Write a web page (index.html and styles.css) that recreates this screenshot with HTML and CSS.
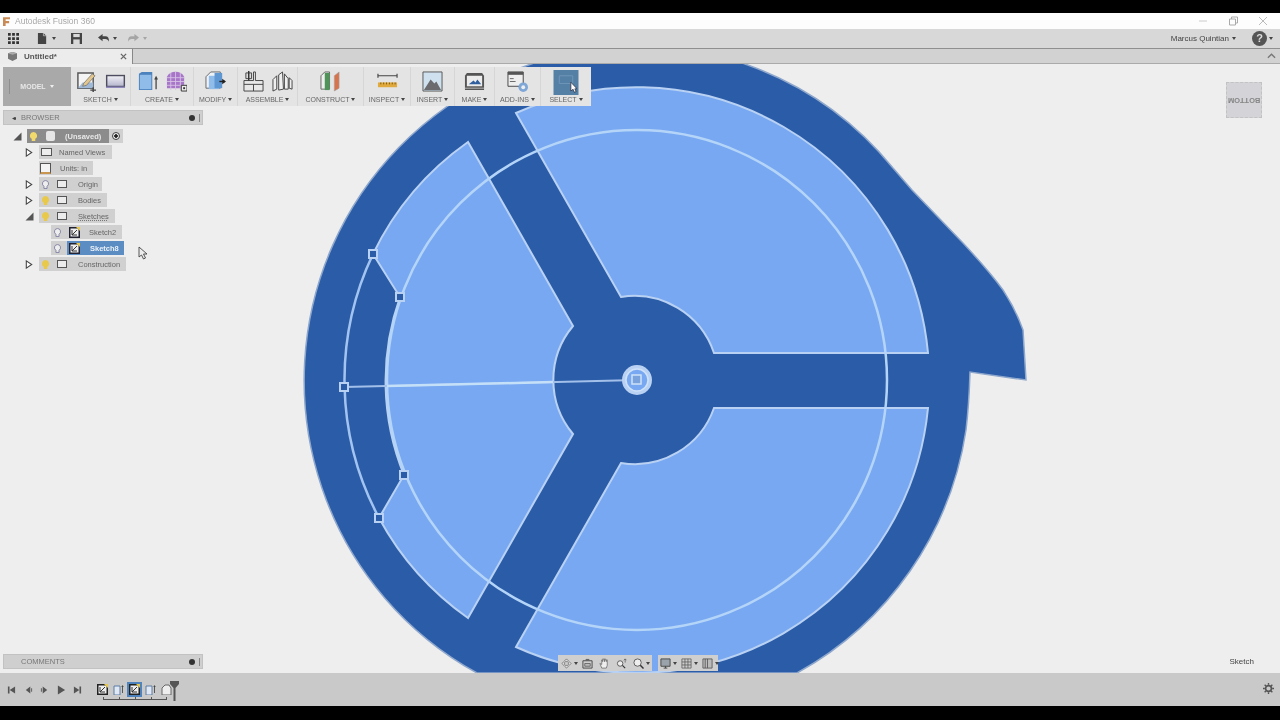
FILE: index.html
```html
<!DOCTYPE html>
<html lang="en">
<head>
<meta charset="utf-8">
<title>Autodesk Fusion 360</title>
<link rel="stylesheet" href="styles.css">
</head>
<body>
<div class="letterbox-top"></div>
<header class="titlebar">
  <div class="title-left">
    <svg class="f-logo" viewBox="0 0 8 10"><path d="M0 0h8v2.500H3v2h4v2.400H3V10H0z" fill="#c98a55"/></svg>
    <span>Autodesk Fusion 360</span>
  </div>
  <div class="win-controls">
    <svg viewBox="0 0 10 10"><path d="M1 5h8" stroke="#ccc"/></svg>
    <svg viewBox="0 0 10 10"><path d="M1.500 3h6v6h-6zM3.500 3V1h6v6H7.500" fill="none" stroke="#aaa"/></svg>
    <svg viewBox="0 0 10 10"><path d="M1 1l8 8M9 1l-8 8" stroke="#bbb"/></svg>
  </div>
</header>
<div class="appbar">
  <div class="app-left">
    <svg class="i12" viewBox="0 0 12 12"><path d="M0 0h3v3H0zM4.500 0h3v3h-3zM9 0h3v3H9zM0 4.500h3v3H0zM4.500 4.500h3v3h-3zM9 4.500h3v3H9zM0 9h3v3H0zM4.500 9h3v3h-3zM9 9h3v3H9z" fill="#333"/></svg>
    <span class="file-btn">
      <svg class="i12" viewBox="0 0 12 12"><path d="M1 0h6l3 3v9H1z" fill="#444"/><path d="M7 0v3h3" fill="none" stroke="#ddd" stroke-width=".7"/></svg><i class="caret"></i>
    </span>
    <svg class="i12 save" viewBox="0 0 12 12"><path d="M0 0h12v12H0z" fill="#444"/><path d="M2.500 1h7v3.500h-7z" fill="#d9d9d9"/><path d="M2.500 7h7v5h-7z" fill="#d9d9d9"/></svg>
    <span class="undo-btn">
      <svg class="i12" viewBox="0 0 12 12"><path d="M0 5l5-4v2.500h3c3 0 4 2 4 6-1-2-2-3-4-3H5V9z" fill="#444"/></svg><i class="caret"></i>
    </span>
    <span class="redo-btn">
      <svg class="i12" viewBox="0 0 12 12"><path d="M12 5L7 1v2.500H4c-3 0-4 2-4 6 1-2 2-3 4-3h3V9z" fill="#a5a5a5"/></svg><i class="caret light"></i>
    </span>
  </div>
  <div class="app-right">
    <span class="user">Marcus Quintian</span><i class="caret user-caret"></i>
    <span class="help">?</span><i class="caret"></i>
  </div>
</div>
<div class="tabbar">
  <div class="tab">
    <svg class="tab-icon" viewBox="0 0 12 10"><path d="M1 1.500L6 0l5 1.500v6L6 10 1 7.500z" fill="#777"/><path d="M1 1.500L6 3l5-1.500L6 0z" fill="#aaa"/></svg>
    <span class="tab-name">Untitled*</span>
    <svg class="tab-close" viewBox="0 0 8 8"><path d="M1 1l6 6M7 1L1 7" stroke="#666" stroke-width="1.500"/></svg>
  </div>
  <svg class="tab-chevron" viewBox="0 0 10 6"><path d="M1 5l4-4 4 4" fill="none" stroke="#777" stroke-width="1.500"/></svg>
</div>

<main class="viewport">
  <svg class="model" viewBox="0 64 1280 609" width="1280" height="609">
    <path class="body" d="M745 64 A334 334 0 0 1 893 168 L912 190 L963 243 Q990 272 1003 290 Q1016 310 1023 330 L1026 380 L970 372 Q969 405 966 430 A334 334 0 0 1 797 673 L477 673 A334 334 0 0 1 745 64 Z"/>
    <path class="sector" d="M516 113 L621 297 A84 84 0 0 1 714 353 L928 353 A293 293 0 0 0 516 113 Z"/>
    <path class="sector" d="M516 647 L621 463 A84 84 0 0 0 714 408 L928 408 A293 293 0 0 1 516 647 Z"/>
    <path class="sector" d="M573 326 L468 142 A293 293 0 0 0 373 254 L400 297 A250 250 0 0 0 404 475 L379 518 A293 293 0 0 0 468 618 L573 434 A84 84 0 0 1 573 326 Z"/>
    <circle class="ring" cx="637" cy="380" r="250"/>
    <path class="arc" d="M373 254 A293 293 0 0 0 379 518"/>
    <path class="axis" d="M344 387 L637 380"/>
    <path class="axis-bright" d="M387 386 L553 382"/>
    <g class="node">
      <rect x="369" y="250" width="8" height="8"/>
      <rect x="396" y="293" width="8" height="8"/>
      <rect x="340" y="383" width="8" height="8"/>
      <rect x="400" y="471" width="8" height="8"/>
      <rect x="375" y="514" width="8" height="8"/>
    </g>
    <circle class="hub-o" cx="637" cy="380" r="15"/>
    <circle class="hub-i" cx="637" cy="380" r="11"/>
    <rect class="hub-s" x="632" y="375" width="9" height="9"/>
  </svg>

  <nav class="ribbon">
    <div class="model-btn"><span>MODEL</span><i class="caret white"></i></div>
    <div class="rgroup g-sketch">
      <div class="ricons">
        <svg class="r22" viewBox="0 0 22 22"><path d="M2 2h16v16H2z" fill="#f4f4f4" stroke="#555" stroke-width="1.500"/><path d="M2 18l5-6h11v6z" fill="#9fb9d6"/><path d="M8 13l9-10 3 2-9 10-4 1z" fill="#e3c78c" stroke="#666" stroke-width=".7"/><path d="M15 20h6M18 17v6" stroke="#444" stroke-width="1.500"/></svg>
        <svg class="r22" viewBox="0 0 22 22"><defs><linearGradient id="plane" x1="0" y1="0" x2="0" y2="1"><stop offset="0" stop-color="#eeeef4"/><stop offset="1" stop-color="#b8b8d0"/></linearGradient></defs><path d="M1 4h20v13H1z" fill="#4d4d60"/><path d="M2.500 5.500h17v10h-17z" fill="url(#plane)"/><path d="M1 17h20" stroke="#8e86bc" stroke-width="1.500"/></svg>
      </div>
      <div class="rlabel">SKETCH<i class="caret"></i></div>
    </div>
    <div class="rgroup g-create">
      <div class="ricons">
        <svg class="r22" viewBox="0 0 22 22"><path d="M2 3l3-2h11v19H2z" fill="#4d83bd"/><path d="M3 4h12v15H3z" fill="#8fbce8"/><path d="M20 8v11" stroke="#555" stroke-width="1.500"/><path d="M18 9l2-4 2 4z" fill="#444"/></svg>
        <svg class="r22" viewBox="0 0 22 22"><path d="M1 6c3-7 15-7 18 0v12H1z" fill="#a776c8"/><path d="M1 7h18M1 11h18M1 15h18M5 2v18M10 1v19M15 2v18" stroke="#d8c4e6" stroke-width=".9"/><path d="M16 15h6v6h-6z" fill="#eee" stroke="#333"/><path d="M18 17h2v2h-2z" fill="#333"/></svg>
      </div>
      <div class="rlabel">CREATE<i class="caret"></i></div>
    </div>
    <div class="rgroup g-modify">
      <div class="ricons">
        <svg class="r22" viewBox="0 0 22 22"><path d="M1 6l5-5h10v17H1z" fill="#eef2f7" stroke="#666"/><path d="M4 5h11v14H4z" fill="#8fbce8"/><path d="M10 2h8v16h-8z" fill="#5e97d1"/><path d="M15 11h6" stroke="#222" stroke-width="1.500"/><path d="M18 8l4 3-4 3z" fill="#222"/></svg>
      </div>
      <div class="rlabel">MODIFY<i class="caret"></i></div>
    </div>
    <div class="rgroup g-assemble">
      <div class="ricons">
        <svg class="r22" viewBox="0 0 22 22"><path d="M1 10h10V1h2v9h8v11H1z" fill="#e8e8e8" stroke="#444"/><path d="M1 14h20M11 14v7" stroke="#444"/><path d="M3 2h6v6H3z" fill="#ddd" stroke="#444"/><path d="M6 0v10" stroke="#333" stroke-width="1.500"/></svg>
        <svg class="r22" viewBox="0 0 22 22"><path d="M1 9l4-4v14l-4 2zM7 4l4-3 1 18-5 1zM13 3l4 5v11h-4zM18 7l3 3v9l-3-1z" fill="#efefef" stroke="#444"/></svg>
      </div>
      <div class="rlabel">ASSEMBLE<i class="caret"></i></div>
    </div>
    <div class="rgroup g-construct">
      <div class="ricons">
        <svg class="r22" viewBox="0 0 22 22"><path d="M1 5l4-4h5v18H1z" fill="#eee" stroke="#666"/><path d="M5 2h5v18H5z" fill="#4e9458"/><path d="M15 5l5-4v17l-5 3z" fill="#d9734a" stroke="#a0a0a0" stroke-width=".6"/></svg>
      </div>
      <div class="rlabel">CONSTRUCT<i class="caret"></i></div>
    </div>
    <div class="rgroup g-inspect">
      <div class="ricons">
        <svg class="r22" viewBox="0 0 22 22"><path d="M1 5h20M1 3v4M21 3v4" stroke="#444" stroke-width="1.200"/><path d="M1 12h20v5H1z" fill="#e0aa3e"/><path d="M4 12v2M7 12v2M10 12v2M13 12v2M16 12v2M19 12v2" stroke="#7d5a12"/></svg>
      </div>
      <div class="rlabel">INSPECT<i class="caret"></i></div>
    </div>
    <div class="rgroup g-insert">
      <div class="ricons">
        <svg class="r22" viewBox="0 0 22 22"><path d="M1 1h20v20H1z" fill="#cfe0ee" stroke="#555"/><path d="M2 20l7-11 4 4 2-2 5 9z" fill="#6b6b6f"/></svg>
      </div>
      <div class="rlabel">INSERT<i class="caret"></i></div>
    </div>
    <div class="rgroup g-make">
      <div class="ricons">
        <svg class="r22" viewBox="0 0 22 22"><path d="M3 2h16l2 3v15H1V5z" fill="#555"/><path d="M3 5h16v11H3z" fill="#ececec"/><path d="M5 14l5-4 2 2 2-3 4 5z" fill="#2f5f9e"/><path d="M1 18h20" stroke="#bbb"/></svg>
      </div>
      <div class="rlabel">MAKE<i class="caret"></i></div>
    </div>
    <div class="rgroup g-addins">
      <div class="ricons">
        <svg class="r22" viewBox="0 0 22 22"><path d="M1 1h16v15H1z" fill="#eee" stroke="#444"/><path d="M1 1h16v3H1z" fill="#555"/><path d="M3 8h4M3 11h6" stroke="#666"/><circle cx="17" cy="17" r="5" fill="#7ea6d6"/><circle cx="17" cy="17" r="2" fill="#eee"/></svg>
      </div>
      <div class="rlabel">ADD-INS<i class="caret"></i></div>
    </div>
    <div class="rgroup g-select">
      <div class="select-icon">
        <svg class="sel-rect" viewBox="0 0 26 26"><path d="M0 0h26v26H0z" fill="#5580a6"/><path d="M6 6h14v8H6z" fill="none" stroke="#6e96b8"/></svg>
        <svg class="sel-cursor" viewBox="0 0 8 12"><path d="M1 0v10l2.500-2L5 11.500 7 10.500 5.500 7.500H8z" fill="#fff" stroke="#223" stroke-width=".8"/></svg>
      </div>
      <div class="rlabel">SELECT<i class="caret"></i></div>
    </div>
  </nav>

  <aside class="browser">
    <div class="panel-head">
      <span class="collapse">◂◂</span><span class="panel-title">BROWSER</span>
      <span class="pin"></span><span class="sep"></span>
    </div>
    <ul class="tree">
      <li class="row root">
        <svg class="exp open" viewBox="0 0 9 9"><path d="M8.500.5v8H.5z" fill="#555"/></svg>
        <span class="chip c-root">
          <svg class="bulb" viewBox="0 0 8 10"><path d="M4 0a4 4 0 0 1 2 7.500V10H2V7.500A4 4 0 0 1 4 0z" fill="#f2d96b"/></svg>
          <span class="doc"></span><b>(Unsaved)</b>
        </span>
        <span class="radio"><i></i></span>
      </li>
      <li class="row">
        <svg class="exp" viewBox="0 0 8 10"><path d="M1 1l6 4-6 4z" fill="#fff" stroke="#444" stroke-width="1.200"/></svg>
        <span class="chip c-views"><span class="folder"></span><span class="label">Named Views</span></span>
      </li>
      <li class="row">
        <span class="exp-gap"></span>
        <span class="chip c-units"><span class="sheet"></span><span class="label">Units: in</span></span>
      </li>
      <li class="row">
        <svg class="exp" viewBox="0 0 8 10"><path d="M1 1l6 4-6 4z" fill="#fff" stroke="#444" stroke-width="1.200"/></svg>
        <span class="chip c-origin">
          <svg class="bulb" viewBox="0 0 8 10"><path d="M4 .5a3.500 3.500 0 0 1 1.800 6.500v2.500H2.200V7A3.500 3.500 0 0 1 4 .5z" fill="#eee" stroke="#7a7aa0"/></svg>
          <span class="folder"></span><span class="label">Origin</span>
        </span>
      </li>
      <li class="row">
        <svg class="exp" viewBox="0 0 8 10"><path d="M1 1l6 4-6 4z" fill="#fff" stroke="#444" stroke-width="1.200"/></svg>
        <span class="chip c-bodies">
          <svg class="bulb" viewBox="0 0 8 10"><path d="M4 0a4 4 0 0 1 2 7.500V10H2V7.500A4 4 0 0 1 4 0z" fill="#e9c94a"/></svg>
          <span class="folder"></span><span class="label">Bodies</span>
        </span>
      </li>
      <li class="row">
        <svg class="exp open" viewBox="0 0 9 9"><path d="M8.500.5v8H.5z" fill="#555"/></svg>
        <span class="chip c-sketches">
          <svg class="bulb" viewBox="0 0 8 10"><path d="M4 0a4 4 0 0 1 2 7.500V10H2V7.500A4 4 0 0 1 4 0z" fill="#e9c94a"/></svg>
          <span class="folder"></span><span class="label dotted">Sketches</span>
        </span>
      </li>
      <li class="row child">
        <span class="chip c-sk2">
          <svg class="bulb" viewBox="0 0 8 10"><path d="M4 .5a3.500 3.500 0 0 1 1.800 6.500v2.500H2.200V7A3.500 3.500 0 0 1 4 .5z" fill="#eee" stroke="#7a7aa0"/></svg>
          <svg class="sk-icon" viewBox="0 0 11 11"><path d="M0 0h11v11H0z" fill="#223"/><path d="M1.500 1.500h8v8h-8z" fill="#eee"/><path d="M3 8l5-5M3 3v5h5" fill="none" stroke="#333"/><path d="M7 0h4v4z" fill="#e6c84f"/></svg>
          <span class="label">Sketch2</span>
        </span>
      </li>
      <li class="row child">
        <span class="chip c-sk8">
          <svg class="bulb" viewBox="0 0 8 10"><path d="M4 .5a3.500 3.500 0 0 1 1.800 6.500v2.500H2.200V7A3.500 3.500 0 0 1 4 .5z" fill="#eee" stroke="#7a7aa0"/></svg>
          <span class="active">
            <svg class="sk-icon" viewBox="0 0 11 11"><path d="M0 0h11v11H0z" fill="#223"/><path d="M1.500 1.500h8v8h-8z" fill="#eee"/><path d="M3 8l5-5M3 3v5h5" fill="none" stroke="#333"/><path d="M7 0h4v4z" fill="#e6c84f"/></svg>
            <b>Sketch8</b>
          </span>
        </span>
      </li>
      <li class="row">
        <svg class="exp" viewBox="0 0 8 10"><path d="M1 1l6 4-6 4z" fill="#fff" stroke="#444" stroke-width="1.200"/></svg>
        <span class="chip c-constr">
          <svg class="bulb" viewBox="0 0 8 10"><path d="M4 0a4 4 0 0 1 2 7.500V10H2V7.500A4 4 0 0 1 4 0z" fill="#e9c94a"/></svg>
          <span class="folder"></span><span class="label">Construction</span>
        </span>
      </li>
    </ul>
  </aside>

  <svg class="mouse" viewBox="0 0 10 14"><path d="M1 1v10l2.500-2L5.500 13l2-1-2-4H9z" fill="#eee" stroke="#444" stroke-width=".9"/></svg>

  <div class="viewcube"><span>BOTTOM</span></div>

  <div class="comments">
    <span class="panel-title">COMMENTS</span><span class="pin"></span><span class="sep"></span>
  </div>

  <div class="navbar">
    <div class="nav-seg seg-a">
      <svg class="n12" viewBox="0 0 12 12"><path d="M6 1l2 2-1 1h-2L4 3zM1 6l2-2 1 1v2L3 8zM11 6L9 4 8 5v2l1 1zM6 11L4 9l1-1h2l1 1z" fill="#ddd" stroke="#666" stroke-width=".8"/></svg><i class="caret"></i>
      <svg class="n12" viewBox="0 0 12 12"><path d="M1 3h10v8H1z" fill="none" stroke="#444"/><path d="M3 6h6v3H3z" fill="#bbb" stroke="#444" stroke-width=".7"/><path d="M4 1h4v2H4z" fill="#666"/></svg>
      <svg class="n12" viewBox="0 0 12 12"><path d="M3 11L1 6l2 1V2l1 2V1h1l1 3V1h1l1 3V2h1v6l-1 3z" fill="#eee" stroke="#666" stroke-width=".8"/></svg>
      <svg class="n12" viewBox="0 0 12 12"><circle cx="4.500" cy="6" r="3" fill="#eee" stroke="#555"/><path d="M7 8l3 3" stroke="#333" stroke-width="1.300"/><path d="M10 1v4M8.500 2.500L10 1l1.500 1.500" fill="none" stroke="#555" stroke-width=".8"/></svg>
      <svg class="n12" viewBox="0 0 12 12"><circle cx="5" cy="5" r="4" fill="#eee" stroke="#555"/><path d="M8 8l3.500 3.500" stroke="#333" stroke-width="1.600"/></svg><i class="caret"></i>
    </div>
    <div class="nav-seg seg-b">
      <svg class="n12" viewBox="0 0 12 12"><path d="M1 1h10v8H1z" fill="#9aa3ab" stroke="#444"/><path d="M4 11h4M6 9v2" stroke="#444"/></svg><i class="caret"></i>
      <svg class="n12" viewBox="0 0 12 12"><path d="M1 1h10v10H1zM4.300 1v10M7.600 1v10M1 4.300h10M1 7.600h10" fill="#ccc" stroke="#555" stroke-width=".8"/></svg><i class="caret"></i>
      <svg class="n12" viewBox="0 0 12 12"><path d="M1 1h10v10H1zM6 1v10M3.500 1v10" fill="#bbb" stroke="#555" stroke-width=".9"/></svg><i class="caret"></i>
    </div>
  </div>

  <div class="mode-label">Sketch</div>
</main>

<footer class="timeline">
  <div class="controls">
    <svg class="tc" viewBox="0 0 10 10"><path d="M1 1h1.800v8H1zM9 1v8L3 5z" fill="#555"/></svg>
    <svg class="tc" viewBox="0 0 10 10"><path d="M7 1v8L2 5zM8 3h1v4H8z" fill="#555"/></svg>
    <svg class="tc" viewBox="0 0 10 10"><path d="M3 1v8l5-4zM1 3h1v4H1z" fill="#555"/></svg>
    <svg class="tc" viewBox="0 0 10 10"><path d="M1 0v10l8-5z" fill="#555"/></svg>
    <svg class="tc" viewBox="0 0 10 10"><path d="M1 1v8l6-4zM7.200 1H9v8H7.200z" fill="#555"/></svg>
  </div>
  <div class="features">
    <svg class="tf" viewBox="0 0 11 11"><path d="M0 0h11v11H0z" fill="#222"/><path d="M1.500 1.500h8v8h-8z" fill="#eee"/><path d="M3 8l5-5M3 3v5h5" fill="none" stroke="#333"/><path d="M7 0h4v4z" fill="#e6c84f"/></svg>
    <svg class="tf" viewBox="0 0 11 11"><path d="M1 2h6v9H1z" fill="#dfe8f3" stroke="#5c7da5"/><path d="M9.500 9V2" stroke="#555"/><path d="M8.300 3l1.200-2 1.200 2z" fill="#444"/></svg>
    <span class="tf-active"><svg class="tf" viewBox="0 0 11 11"><path d="M0 0h11v11H0z" fill="#222"/><path d="M1.500 1.500h8v8h-8z" fill="#eee"/><path d="M3 8l5-5M3 3v5h5" fill="none" stroke="#333"/><path d="M7 0h4v4z" fill="#e6c84f"/></svg></span>
    <svg class="tf" viewBox="0 0 11 11"><path d="M1 2h6v9H1z" fill="#dfe8f3" stroke="#5c7da5"/><path d="M9.500 9V2" stroke="#555"/><path d="M8.300 3l1.200-2 1.200 2z" fill="#444"/></svg>
    <svg class="tf" viewBox="0 0 11 11"><path d="M1 4l3-3h4l2 3v7H1z" fill="#eee" stroke="#666"/></svg>
    <svg class="marker" viewBox="0 0 9 20"><path d="M0 0h9v3L5.500 7v13h-2V7L0 3z" fill="#555"/></svg>
    <span class="bracket"></span>
  </div>
  <svg class="gear" viewBox="0 0 12 12"><circle cx="6" cy="6" r="3.200" fill="none" stroke="#555" stroke-width="1.800"/><path d="M6 0v2M6 10v2M0 6h2M10 6h2M1.800 1.800l1.400 1.400M8.800 8.800l1.400 1.400M1.800 10.200l1.400-1.400M8.800 3.200l1.400-1.400" stroke="#555" stroke-width="1.500"/></svg>
</footer>
<div class="letterbox-bottom"></div>
</body>
</html>
```
FILE: styles.css
```css
* { box-sizing: border-box; }
html, body { margin: 0; padding: 0; background: #000; }
body {
  width: 1280px;
  height: 720px;
  overflow: hidden;
  display: flex;
  flex-direction: column;
  background: #000;
  font-family: "Liberation Sans", Arial, sans-serif;
  color: #555;
  filter: blur(0.35px);
}
svg { display: block; flex: none; }
ul { list-style: none; margin: 0; padding: 0; }
.letterbox-top { height: 13px; background: #000; flex: none; }
.letterbox-bottom { height: 14px; background: #000; flex: none; }

.caret {
  display: inline-block;
  width: 0; height: 0;
  flex: none;
  border-left: 2px solid transparent;
  border-right: 2px solid transparent;
  border-top: 3px solid #444;
}
.caret.light { border-top-color: #a5a5a5; }
.caret.white { border-top-color: #eee; }

.titlebar {
  height: 16px;
  flex: none;
  background: #fdfdfd;
  display: flex;
  align-items: center;
  justify-content: space-between;
}
.title-left { display: flex; align-items: center; gap: 5px; padding-left: 3px; font-size: 8.500px; color: #a8a8a8; }
.f-logo { width: 7px; height: 9px; }
.win-controls { display: flex; gap: 20px; padding-right: 12px; }
.win-controls svg { width: 10px; height: 10px; }

.appbar {
  height: 20px;
  flex: none;
  background: #d8d8d8;
  border-bottom: 1px solid #8f8f8f;
  display: flex;
  align-items: center;
  justify-content: space-between;
}
.app-left { display: flex; align-items: center; padding-left: 8px; }
.i12 { width: 11px; height: 11px; }
.file-btn, .undo-btn, .redo-btn { display: flex; align-items: center; gap: 4px; }
.file-btn { margin-left: 18px; }
.save { margin-left: 15px; }
.undo-btn { margin-left: 16px; }
.redo-btn { margin-left: 11px; }
.app-right { display: flex; align-items: center; padding-right: 7px; font-size: 8px; color: #444; }
.user-caret { margin: 0 16px 0 3px; }
.help {
  width: 15px; height: 15px;
  border-radius: 50%;
  background: #555;
  color: #ddd;
  font-weight: bold;
  font-size: 11px;
  line-height: 15px;
  text-align: center;
  margin-right: 2px;
}

.tabbar {
  height: 15px;
  flex: none;
  background: #d2d2d2;
  border-bottom: 1px solid #aaa;
  display: flex;
  align-items: center;
  justify-content: space-between;
}
.tab {
  width: 133px;
  height: 15px;
  background: #ececec;
  border-right: 1px solid #888;
  display: flex;
  align-items: center;
  padding-left: 7px;
}
.tab-icon { width: 11px; height: 9px; }
.tab-name { margin-left: 6px; font-size: 8px; color: #555; flex: 1; font-weight: bold; }
.tab-close { width: 7px; height: 7px; margin-right: 5px; }
.tab-chevron { width: 9px; height: 6px; margin-right: 4px; }

.viewport {
  position: relative;
  height: 609px;
  flex: none;
  background: #eeeeee;
  overflow: hidden;
}
.model { position: absolute; left: 0; top: 0; }
.body { fill: #2b5ca8; stroke: #8ea7cc; stroke-width: 1.500; }
.sector { fill: #78a8f2; stroke: #b9d2f3; stroke-width: 2; }
.ring { fill: none; stroke: #b5d5f8; stroke-width: 2.500; }
.arc { fill: none; stroke: #a3c4f0; stroke-width: 2.500; }
.axis { stroke: #a3c0ea; stroke-width: 2; }
.axis-bright { stroke: #c4dff8; stroke-width: 2.500; }
.node rect { fill: #2b5ca8; stroke: #b9d2f3; stroke-width: 2; }
.hub-o { fill: #b9d2f3; }
.hub-i { fill: #78a8f2; stroke: #cfe2f8; stroke-width: 1.500; }
.hub-s { fill: #7aa2dc; stroke: #cfe2f8; stroke-width: 1.500; }

.ribbon {
  position: absolute;
  left: 3px;
  top: 3px;
  width: 588px;
  height: 39px;
  background: #e4e4e4;
  display: flex;
}
.model-btn {
  position: relative;
  width: 68px;
  flex: none;
  background: #a9a9a9;
  color: #e8e8e8;
  font-size: 7px;
  font-weight: bold;
  display: flex;
  align-items: center;
  justify-content: center;
  gap: 4px;
}
.model-btn::before {
  content: "";
  position: absolute;
  left: 6px;
  top: 12px;
  width: 1px;
  height: 15px;
  background: #8e8e8e;
}
.rgroup {
  flex: none;
  display: flex;
  flex-direction: column;
  align-items: center;
  justify-content: space-between;
  padding: 4px 0 2px;
  border-right: 1px solid #d6d6d6;
}
.ricons { display: flex; gap: 8px; }
.r22 { width: 21px; height: 21px; }
.rlabel {
  font-size: 7px;
  line-height: 9px;
  color: #666;
  display: flex;
  align-items: center;
  gap: 2px;
  white-space: nowrap;
}
.g-sketch { width: 60px; }
.g-create { width: 63px; }
.g-modify { width: 44px; }
.g-assemble { width: 60px; }
.g-construct { width: 66px; }
.g-inspect { width: 47px; }
.g-insert { width: 44px; }
.g-make { width: 40px; }
.g-addins { width: 46px; }
.g-select { width: 50px; border-right: 0; padding-top: 3px; }
.select-icon { position: relative; width: 26px; height: 25px; }
.sel-rect { width: 26px; height: 25px; }
.sel-cursor { position: absolute; left: 17px; top: 12px; width: 7px; height: 11px; }

.browser { position: absolute; left: 3px; top: 46px; width: 200px; }
.panel-head, .comments {
  height: 15px;
  background: #cfcfcf;
  border: 1px solid #c2c2c2;
  display: flex;
  align-items: center;
  font-size: 7.500px;
  color: #777;
}
.collapse { width: 17px; font-size: 6px; color: #444; text-align: center; letter-spacing: -2px; }
.panel-title { flex: 1; }
.pin { width: 6px; height: 6px; border-radius: 50%; background: #333; }
.sep { width: 1px; height: 8px; background: #888; margin: 0 2px 0 4px; }

.tree { display: flex; flex-direction: column; padding-top: 3px; }
.row { height: 16px; display: flex; align-items: center; padding-left: 22px; }
.row.root { padding-left: 10px; }
.row.child { padding-left: 48px; }
.exp { width: 8px; height: 9px; margin-right: 6px; }
.exp.open { width: 9px; height: 9px; margin-right: 5px; }
.exp-gap { width: 14px; flex: none; }
.root .exp { margin-right: 5px; }
.chip {
  height: 14px;
  background: #d0d0d0;
  display: flex;
  align-items: center;
  font-size: 7.500px;
  color: #666;
  padding-left: 3px;
}
.c-root { width: 82px; background: #8c8c8c; }
.c-root b { color: #e8e8e8; font-size: 7.500px; margin-left: 10px; }
.c-views { width: 73px; padding-left: 2px; }
.c-units { width: 54px; padding-left: 1px; }
.c-origin { width: 63px; }
.c-bodies { width: 68px; }
.c-sketches { width: 76px; }
.c-sk2 { width: 71px; }
.c-sk8 { width: 73px; }
.c-constr { width: 87px; }
.bulb { width: 7px; height: 9px; }
.doc { width: 9px; height: 10px; margin-left: 9px; background: #e6e6e6; border-radius: 2px; }
.folder { width: 10px; height: 8px; margin-left: 8px; flex: none; background: #ececec; border: 1px solid #555; }
.c-views .folder { width: 11px; margin-left: 0; }
.sheet { width: 11px; height: 11px; background: #f4f4f4; border: 1px solid #555; border-bottom: 2px solid #c8964e; flex: none; }
.label { margin-left: 11px; white-space: nowrap; }
.c-views .label { margin-left: 7px; }
.c-units .label { margin-left: 9px; }
.dotted { text-decoration: underline dotted #777; }
.sk-icon { width: 11px; height: 11px; margin-left: 8px; }
.c-sk2 .label { margin-left: 9px; }
.active {
  height: 14px;
  flex: 1;
  margin-left: 6px;
  padding-left: 2px;
  background: #5b8cc2;
  display: flex;
  align-items: center;
}
.active .sk-icon { margin-left: 0; }
.active b { color: #eaf1f8; font-size: 7.500px; margin-left: 10px; }
.radio {
  width: 14px; height: 14px;
  background: #d0d0d0;
  display: flex;
  align-items: center;
  justify-content: center;
}
.radio i { width: 8px; height: 8px; border-radius: 50%; border: 1px solid #444; background: radial-gradient(circle, #222 0 1.500px, #eee 2px); }

.mouse { position: absolute; left: 138px; top: 182px; width: 10px; height: 14px; }

.viewcube {
  position: absolute;
  left: 1226px;
  top: 18px;
  width: 36px;
  height: 36px;
  background: #d4d4d8;
  border: 1px dashed #c2c2c2;
  display: flex;
  align-items: center;
  justify-content: center;
  font-size: 7.500px;
  font-weight: bold;
  color: #858585;
}
.viewcube span { transform: rotate(180deg); }

.comments { position: absolute; left: 3px; top: 590px; width: 200px; padding-left: 17px; }

.navbar {
  position: absolute;
  left: 558px;
  top: 591px;
  height: 16px;
  display: flex;
  gap: 6px;
}
.nav-seg {
  background: #cfcfcf;
  display: flex;
  align-items: center;
  gap: 6px;
}
.seg-a { padding: 0 4px 0 3px; }
.seg-b { padding: 0 1px 0 2px; }
.nav-seg .caret { margin: 0 -2px 0 -4px; }
.n12 { width: 11px; height: 11px; }

.mode-label { position: absolute; right: 26px; top: 593px; font-size: 8px; color: #444; }

.timeline {
  height: 33px;
  flex: none;
  background: #c9c9c9;
  display: flex;
  align-items: center;
  position: relative;
}
.controls { display: flex; gap: 7.500px; padding-left: 7px; }
.tc { width: 9px; height: 10px; }
.features { position: relative; display: flex; align-items: center; gap: 5px; margin-left: 15px; height: 33px; }
.tf { width: 11px; height: 11px; }
.tf-active { width: 15px; height: 15px; background: #4f83bd; display: flex; align-items: center; justify-content: center; margin: 0 -2px; }
.marker { position: absolute; left: 73px; top: 7px; width: 9px; height: 22px; }
.bracket {
  position: absolute;
  left: 6px;
  width: 64px;
  top: 24px;
  height: 3px;
  border: 1px solid #555;
  border-top: 0;
  background:
    linear-gradient(#555, #555) 15px 0 / 1px 100% no-repeat,
    linear-gradient(#555, #555) 31px 0 / 1px 100% no-repeat,
    linear-gradient(#555, #555) 47px 0 / 1px 100% no-repeat;
}
.gear { position: absolute; right: 6px; top: 10px; width: 11px; height: 11px; }
```
